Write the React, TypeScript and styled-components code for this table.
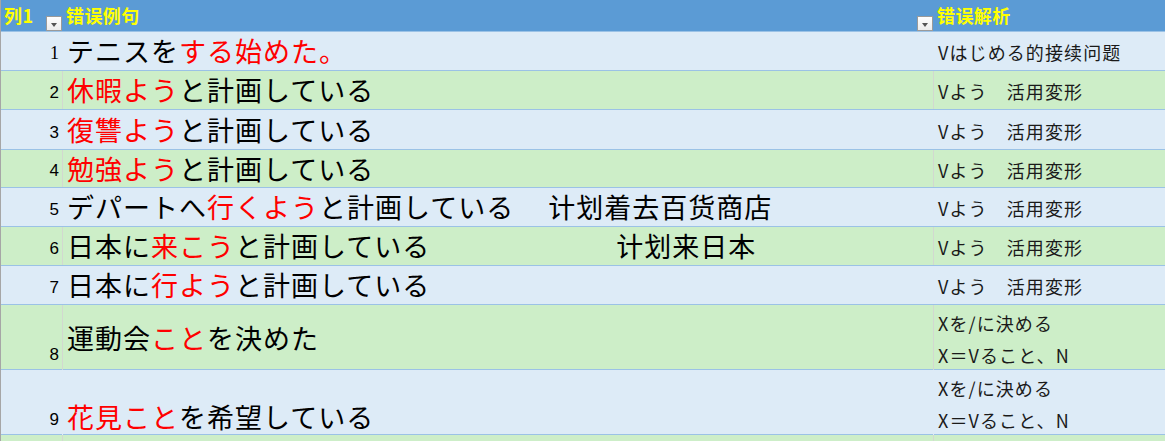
import React from "react";
import styled, { createGlobalStyle } from "styled-components";

const Global = createGlobalStyle`
  html, body { margin: 0; padding: 0; background: #ffffff; }
  body { font-family: "Noto Sans CJK JP", "Noto Sans", sans-serif; }
`;

const Sheet = styled.div`
  width: 1165px;
  height: 441px;
  overflow: hidden;
  display: flex;
  flex-direction: column;
  border-left: 1px solid #a6a6a6;
  box-sizing: border-box;
`;

const HeaderRow = styled.div`
  display: grid;
  grid-template-columns: 61px 871px 1fr;
  height: 32px;
  flex: none;
  background: #5b9bd5;
  border-bottom: 1px solid #9bc2e6;
  box-sizing: border-box;
`;

const HeadCell = styled.div<{ $pad: number }>`
  position: relative;
  display: flex;
  align-items: center;
  padding-left: ${(p) => p.$pad}px;
  color: #ffff00;
  font-family: "Noto Sans CJK SC", sans-serif;
  font-weight: 700;
  font-size: 18px;
  letter-spacing: 0.4px;
  padding-bottom: 1px;
`;

const FilterButton = styled.span`
  position: absolute;
  right: 0;
  bottom: 0;
  width: 16px;
  height: 15px;
  box-sizing: border-box;
  background: linear-gradient(#ffffff, #ececec);
  border: 1px solid #9a9a9a;
  display: flex;
  align-items: center;
  justify-content: center;
  &::after {
    content: "";
    display: block;
    margin-top: 2px;
    border-left: 3.5px solid transparent;
    border-right: 3.5px solid transparent;
    border-top: 4px solid #555555;
  }
`;

type Tone = "blue" | "green";
const toneBg: Record<Tone, string> = { blue: "#ddebf7", green: "#cdeec8" };
const toneLine: Record<Tone, string> = { blue: "#ddebf7", green: "#d2d8d0" };

const Row = styled.div<{ $tone: Tone; $h: number }>`
  display: grid;
  grid-template-columns: 61px 871px 1fr;
  height: ${(p) => p.$h}px;
  flex: none;
  background: ${(p) => toneBg[p.$tone]};
  border-bottom: 1px solid #9bc2e6;
  box-sizing: border-box;
  & > * + * {
    border-left: 1px solid ${(p) => toneLine[p.$tone]};
  }
`;

const NumCell = styled.div<{ $serif?: boolean }>`
  display: flex;
  align-items: flex-end;
  justify-content: flex-end;
  padding: 0 3px 6px 0;
  font-family: ${(p) => (p.$serif ? '"Liberation Serif", serif' : '"Liberation Sans", sans-serif')};
  font-size: ${(p) => (p.$serif ? 18 : 17)}px;
  color: #000;
`;

type VAlign = "center" | "flex-end";

const TextCell = styled.div<{ $v: VAlign }>`
  display: flex;
  align-items: ${(p) => p.$v};
  padding: 0 0 ${(p) => (p.$v === "flex-end" ? 1 : 0)}px 4px;
  font-family: "Noto Sans CJK JP", sans-serif;
  font-size: 27px;
  letter-spacing: 1px;
  color: #000;
  white-space: pre;
  line-height: 36px;
`;

const Red = styled.span`
  color: #ff0000;
`;

const Gloss = styled.span<{ $gap: number }>`
  margin-left: ${(p) => p.$gap}px;
`;

const NoteCell = styled.div`
  display: flex;
  flex-direction: column;
  justify-content: center;
  padding: 2px 0 0 4px;
  font-family: "Noto Sans CJK JP", sans-serif;
  font-size: 18px;
  letter-spacing: 1.1px;
  color: #1a1a1a;
  white-space: pre;
`;

const NoteLine = styled.div`
  height: 32px;
  line-height: 32px;
`;

type RowData = {
  n: number;
  tone: Tone;
  h: number;
  v: VAlign;
  serif?: boolean;
  text: React.ReactNode;
  notes: string[];
};

const VYOU = "Vよう　活用変形";
const KIMERU = ["Xを/に決める", "X＝Vること、N"];

const rows: RowData[] = [
  {
    n: 1, tone: "blue", h: 39, v: "center", serif: true,
    text: (<>テニスを<Red>する始めた。</Red></>),
    notes: ["Vはじめる的接续问题"],
  },
  {
    n: 2, tone: "green", h: 39, v: "center",
    text: (<><Red>休暇よう</Red>と計画している</>),
    notes: [VYOU],
  },
  {
    n: 3, tone: "blue", h: 40, v: "center",
    text: (<><Red>復讐よう</Red>と計画している</>),
    notes: [VYOU],
  },
  {
    n: 4, tone: "green", h: 38, v: "center",
    text: (<><Red>勉強よう</Red>と計画している</>),
    notes: [VYOU],
  },
  {
    n: 5, tone: "blue", h: 39, v: "center",
    text: (<>デパートへ<Red>行くよう</Red>と計画している<Gloss $gap={34}>计划着去百货商店</Gloss></>),
    notes: [VYOU],
  },
  {
    n: 6, tone: "green", h: 39, v: "center",
    text: (<>日本に<Red>来こう</Red>と計画している<Gloss $gap={186}>计划来日本</Gloss></>),
    notes: [VYOU],
  },
  {
    n: 7, tone: "blue", h: 39, v: "center",
    text: (<>日本に<Red>行よう</Red>と計画している</>),
    notes: [VYOU],
  },
  {
    n: 8, tone: "green", h: 65, v: "center",
    text: (<>運動会<Red>こと</Red>を決めた</>),
    notes: KIMERU,
  },
  {
    n: 9, tone: "blue", h: 65, v: "flex-end",
    text: (<><Red>花見こと</Red>を希望している</>),
    notes: KIMERU,
  },
  {
    n: 10, tone: "green", h: 39, v: "center",
    text: null,
    notes: [],
  },
];

export default function App() {
  return (
    <>
      <Global />
      <Sheet>
        <HeaderRow>
          <HeadCell $pad={3}>
            列1
            <FilterButton />
          </HeadCell>
          <HeadCell $pad={4}>
            错误例句
            <FilterButton />
          </HeadCell>
          <HeadCell $pad={4}>错误解析</HeadCell>
        </HeaderRow>
        {rows.map((r) => (
          <Row key={r.n} $tone={r.tone} $h={r.h}>
            <NumCell $serif={r.serif}>{r.text ? r.n : ""}</NumCell>
            <TextCell $v={r.v}>{r.text}</TextCell>
            <NoteCell>
              {r.notes.map((t, i) => (
                <NoteLine key={i}>{t}</NoteLine>
              ))}
            </NoteCell>
          </Row>
        ))}
      </Sheet>
    </>
  );
}
